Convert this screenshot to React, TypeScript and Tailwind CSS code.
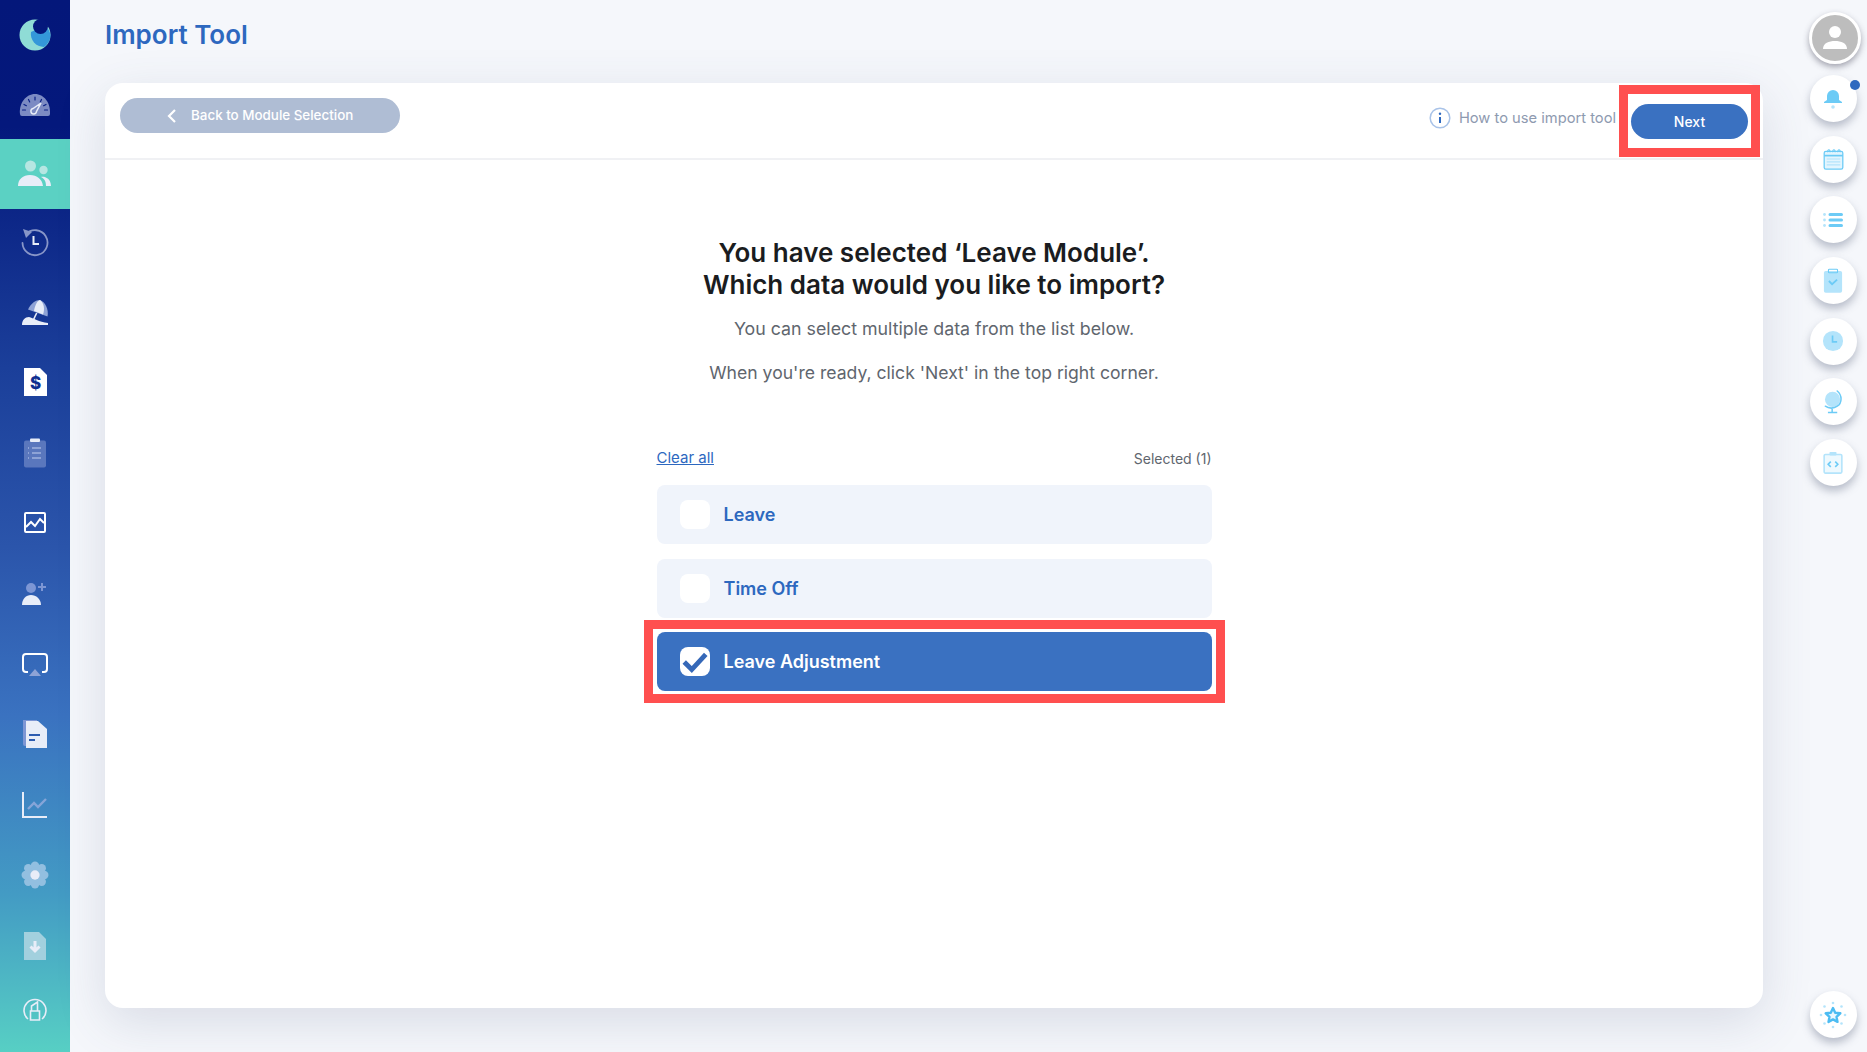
import React from 'react';

const W = '#e8edf8';

const Moon = () => (
  <svg width="32" height="32" viewBox="0 0 32 32">
    <circle cx="16" cy="16" r="15.5" fill="#8fdcd6" />
    <path d="M12 13a13 13 0 0 0 13 15a15.500 15.500 0 0 0 6.500-12a12 12 0 0 0-6.500-9z" fill="#3498d9" />
    <circle cx="21.500" cy="7.500" r="7.500" fill="#04187c" />
  </svg>
);
const Gauge = () => (
  <svg width="32" height="32" viewBox="0 0 32 32">
    <path d="M1 25c-1-11 6-20 15-20s16 9 15 20a2 2 0 0 1-2 2H3a2 2 0 0 1-2-2z" fill="#7c8bc3" />
    <g stroke="#0a2185" strokeWidth="1.200" strokeLinecap="round">
      <path d="M16 8v3M9.500 10.500l1.200 2.400M22.500 10.500l-1.200 2.400M5 15.500l2.400 1.200M27 15.500l-2.400 1.200M3.500 21h3M25.500 21h3" />
    </g>
    <path d="M22 14l-4.500 8.500a2.800 2.800 0 1 1-3.500-3z" fill="none" stroke="#e8edf8" strokeWidth="1.500" />
  </svg>
);
const People = () => (
  <svg width="36" height="32" viewBox="0 0 36 32">
    <circle cx="13.500" cy="8" r="5.500" fill="#b6e6e2" />
    <circle cx="26.500" cy="12" r="4.200" fill="#b6e6e2" />
    <path d="M29 28c0-4-1-7-5-9c3-1 10 1 10 9z" fill="#e8edf8" />
    <path d="M1 28c0-7 5-11 12-11s12 4 13 11z" fill="#e8edf8" />
  </svg>
);
const History = () => (
  <svg width="32" height="32" viewBox="0 0 32 32">
    <path d="M7 8a12.500 12.500 0 1 1-3.500 9" fill="none" stroke="#8896c8" strokeWidth="1.800" strokeLinecap="round" />
    <path d="M4 3l9 3-6 6z" fill="#8896c8" />
    <path d="M14.500 10v8h5.500" fill="none" stroke={W} strokeWidth="2" />
  </svg>
);
const Beach = () => (
  <svg width="32" height="32" viewBox="0 0 32 32">
    <path d="M9 13.500C12 7 17 4 21 4c5 2 9 9 7.500 16.500z" fill="#8fa3d6" />
    <path d="M21 4c-3 1-5 5-6 11l9 3.500C26 13 25 7 21 4z" fill={W} />
    <path d="M17.700 17l-3.400 7" stroke={W} strokeWidth="1.600" />
    <path d="M3 29c0-5 3-8 7-8c4 1 10 5 19 6v2z" fill={W} />
  </svg>
);
const DollarDoc = () => (
  <svg width="32" height="32" viewBox="0 0 32 32">
    <path d="M5 2h16l7 7v21H5z" fill="#fff" />
    <text x="16.500" y="22.500" textAnchor="middle" fontFamily="Inter, sans-serif" fontWeight="800" fontSize="17" fill="#0f2f90">$</text>
  </svg>
);
const Clipboard = () => (
  <svg width="32" height="32" viewBox="0 0 32 32">
    <rect x="5" y="3.500" width="22" height="27" rx="2" fill="#5a77bd" />
    <rect x="11" y="1.500" width="10" height="3.500" rx="1" fill={W} />
    <path d="M13 11h9M13 16h9M13 21h9" stroke="#8ea3d6" strokeWidth="2" />
    <path d="M9 11h1M9 16h1M9 21h1" stroke="#8ea3d6" strokeWidth="2" />
  </svg>
);
const ChartBox = () => (
  <svg width="32" height="32" viewBox="0 0 32 32">
    <rect x="6" y="6" width="20" height="19" rx="1" fill="none" stroke="#fff" strokeWidth="2" />
    <path d="M7 20l5-5 4 4 5-7 4 4" fill="none" stroke="#fff" strokeWidth="2" />
  </svg>
);
const AddUser = () => (
  <svg width="32" height="32" viewBox="0 0 32 32">
    <circle cx="12" cy="10" r="5" fill="#7d96d4" />
    <path d="M3 27c0-6 4-10 9-10s10 4 10 10z" fill={W} />
    <path d="M23 5v8M19 9h8" stroke="#7d96d4" strokeWidth="2" />
  </svg>
);
const Monitor = () => (
  <svg width="32" height="32" viewBox="0 0 32 32">
    <path d="M9 24H7a3 3 0 0 1-3-3V9a3 3 0 0 1 3-3h18a3 3 0 0 1 3 3v12a3 3 0 0 1-3 3h-2" fill="none" stroke="#fff" strokeWidth="2" />
    <path d="M16 21l6 7H10z" fill="#8ea3d6" />
  </svg>
);
const Doc = () => (
  <svg width="32" height="32" viewBox="0 0 32 32">
    <path d="M4 2h14v26H6a2 2 0 0 1-2-2z" fill="#7d96d4" />
    <path d="M7 3h12l9 8v19H7z" fill={W} />
    <path d="M10 17h11" stroke="#2d5cb0" strokeWidth="2" />
    <path d="M10 22h6" stroke="#2d5cb0" strokeWidth="2" />
  </svg>
);
const LineChart = () => (
  <svg width="32" height="32" viewBox="0 0 32 32">
    <path d="M4 3v25h24" fill="none" stroke={W} strokeWidth="2" />
    <path d="M9 20l6-6 4 4 8-8" fill="none" stroke="#86a5d8" strokeWidth="2.400" />
  </svg>
);
const Gear = () => (
  <svg width="32" height="32" viewBox="-3 -3 38 38">
    <g fill="#92bfe0">
      <circle cx="16" cy="5" r="5" /><circle cx="16" cy="27" r="5" />
      <circle cx="5" cy="16" r="5" /><circle cx="27" cy="16" r="5" />
      <circle cx="8" cy="8" r="5" /><circle cx="24" cy="8" r="5" />
      <circle cx="8" cy="24" r="5" /><circle cx="24" cy="24" r="5" />
      <circle cx="16" cy="16" r="9" />
    </g>
    <circle cx="16" cy="16" r="5.500" fill={W} />
  </svg>
);
const DownDoc = () => (
  <svg width="32" height="32" viewBox="0 0 32 32">
    <path d="M5 2h15l7 7v21H5z" fill="#a2d0de" />
    <path d="M16 11v10M11.500 16.500l4.500 4.500 4.500-4.500" fill="none" stroke={W} strokeWidth="3" />
  </svg>
);
const CircleA = () => (
  <svg width="32" height="32" viewBox="0 0 32 32">
    <path d="M9 25a11 11 0 1 1 14 0" fill="none" stroke={W} strokeWidth="1.600" />
    <path d="M11.500 26v-9h9v9zM12.500 17v-5l6-4v9" fill="none" stroke={W} strokeWidth="1.600" />
  </svg>
);

const sideItems = [Gauge, People, History, Beach, DollarDoc, Clipboard, ChartBox, AddUser, Monitor, Doc, LineChart, Gear, DownDoc];

const B = '#6ccbf6';
const L = '#b4e4fb';

const Bell = () => (
  <svg width="20" height="20" viewBox="0 0 20 20">
    <path d="M4 11V7a6 6 0 0 1 12 0v4l3 2v1H1v-1z" fill={B} />
    <circle cx="10" cy="18" r="1.800" fill={L} />
  </svg>
);
const Calendar = () => (
  <svg width="21" height="22" viewBox="0 0 24 26">
    <rect x="1" y="4" width="22" height="21" rx="2" fill="#e3f5fe" stroke={B} strokeWidth="1.500" />
    <path d="M1 9h22" stroke={B} strokeWidth="2" />
    <path d="M4 13h16M4 16.500h16M4 20h16" stroke={L} strokeWidth="1.400" />
    <path d="M5 5c0-4 3-4 3 0M11 5c0-4 3-4 3 0M17 5c0-4 3-4 3 0" fill="none" stroke={B} strokeWidth="1.300" />
  </svg>
);
const ListIcon = () => (
  <svg width="20" height="16" viewBox="0 0 20 16">
    <circle cx="1.500" cy="2.500" r="1.400" fill={L} /><circle cx="1.500" cy="8" r="1.400" fill={L} /><circle cx="1.500" cy="13.500" r="1.400" fill={L} />
    <path d="M7 2.500h11.500M7 8h11.500M7 13.500h11.500" stroke={B} strokeWidth="3" strokeLinecap="round" />
  </svg>
);
const ClipCheck = () => (
  <svg width="20" height="26" viewBox="0 0 22 28">
    <rect x="1" y="3" width="20" height="24" rx="2" fill={L} />
    <rect x="6" y="1" width="10" height="4" rx="1" fill="none" stroke={B} strokeWidth="1.200" />
    <path d="M6.500 14l3.500 3.500 5.500-5" fill="none" stroke={B} strokeWidth="2" />
  </svg>
);
const Clock = () => (
  <svg width="22" height="22" viewBox="0 0 24 24">
    <circle cx="12" cy="12" r="11" fill={L} />
    <path d="M11.500 6v7h5" fill="none" stroke={B} strokeWidth="1.800" />
  </svg>
);
const Globe = () => (
  <svg width="22" height="24" viewBox="0 0 26 28">
    <circle cx="12.500" cy="11" r="9" fill={L} />
    <path d="M18 1c6 5 6 14 0 18c-4 3-10 3-14 0" fill="none" stroke={B} strokeWidth="1.800" strokeLinecap="round" />
    <path d="M12 22v4M7 26.500h11" stroke={B} strokeWidth="1.800" />
  </svg>
);
const CodeClip = () => (
  <svg width="20" height="23" viewBox="0 0 22 26">
    <rect x="1" y="4" width="20" height="21" rx="1.500" fill="#eef9fe" stroke={L} strokeWidth="1.800" />
    <rect x="7" y="1" width="8" height="4" rx="1" fill={L} />
    <path d="M8.500 12l-3 3 3 3M13.500 12l3 3-3 3" fill="none" stroke={B} strokeWidth="1.800" />
  </svg>
);
const StarIcon = () => (
  <svg width="30" height="30" viewBox="0 0 30 30">
    <path d="M15 8l2.200 4.700 5.100.6-3.800 3.500 1 5.100-4.500-2.500-4.500 2.500 1-5.100-3.800-3.500 5.100-.6z" fill="#e9f8ff" stroke="#4cbcf2" strokeWidth="2.400" strokeLinejoin="round" />
    <g fill={L}>
      <circle cx="15" cy="3" r="1.300" /><circle cx="15" cy="27" r="1.300" />
      <circle cx="3" cy="15" r="1.300" /><circle cx="27" cy="15" r="1.300" />
      <circle cx="6.500" cy="6.500" r="1.300" /><circle cx="23.500" cy="6.500" r="1.300" />
      <circle cx="6.500" cy="23.500" r="1.300" /><circle cx="23.500" cy="23.500" r="1.300" />
    </g>
  </svg>
);

const railItems = [Calendar, ListIcon, ClipCheck, Clock, Globe, CodeClip];

const RailButton = ({ children }: { children: React.ReactNode }) => (
  <button className="relative flex h-[47px] w-[47px] items-center justify-center rounded-full bg-white shadow-[0_5px_8px_rgba(70,80,110,0.35)]">
    {children}
  </button>
);

const Row = ({ label }: { label: string }) => (
  <div className="flex h-[59px] items-center rounded-lg bg-[#f0f4fb] pl-[23px]">
    <span className="h-[29px] w-[30px] rounded-lg bg-white" />
    <span className="ml-[14px] text-[18px] font-semibold text-[#2d68bf]">{label}</span>
  </div>
);

export default function App() {
  return (
    <div className="flex h-screen overflow-hidden bg-[#f5f7fb] font-['Inter',sans-serif]">
      {/* Sidebar */}
      <aside className="flex w-[70px] shrink-0 flex-col bg-[linear-gradient(180deg,#04177a_0%,#04187c_12%,#1b3f9a_35%,#2b55ab_52%,#3a72c0_68%,#439bc4_85%,#57cfc4_100%)]">
        <div className="flex h-[69px] items-center justify-center">
          <Moon />
        </div>
        {sideItems.map((Icon, i) => (
          <div
            key={i}
            className={
              i === 0
                ? 'flex h-[70px] items-center justify-center pt-[2px]'
                : i === 1
                  ? 'flex h-[70px] items-center justify-center bg-[#5bd1c3]'
                  : 'flex h-[70.400px] items-center justify-center pb-[5px]'
            }
          >
            <Icon />
          </div>
        ))}
        <div className="flex h-[58px] items-center justify-center pb-[5px]">
          <CircleA />
        </div>
      </aside>

      {/* Main */}
      <main className="flex min-w-0 flex-1 flex-col pb-[44px] pl-[35px] pr-[36px]">
        <div className="flex h-[83px] shrink-0 items-start">
          <h1 className="mt-[17px] text-[26px] font-semibold leading-[35px] text-[#2d68bf]">Import Tool</h1>
        </div>

        <section className="flex flex-1 flex-col rounded-[18px] bg-white shadow-[0_14px_50px_rgba(70,80,120,0.16)]">
          <header className="flex h-[77px] shrink-0 items-start justify-between border-b-2 border-[#f0f1f4] pl-[15px] pr-[3px]">
            <button className="mt-[15px] flex h-[35px] w-[280px] items-center rounded-full bg-[#afbdd4] pl-[46px] text-[13.400px] font-medium text-white">
              <svg width="12" height="16" viewBox="0 0 12 16" className="mr-[13px]">
                <path d="M9 2L3 8l6 6" fill="none" stroke="#fff" strokeWidth="2.200" />
              </svg>
              Back to Module Selection
            </button>
            <div className="mt-[2px] flex items-start">
              <svg width="22" height="22" viewBox="0 0 22 22" className="mr-[8px] mt-[22px]">
                <circle cx="11" cy="11" r="9.800" fill="none" stroke="#a9c3e8" strokeWidth="1.500" />
                <circle cx="11" cy="6.800" r="1.200" fill="#2d68bf" />
                <path d="M11 10v6" stroke="#2d68bf" strokeWidth="2" />
              </svg>
              <span className="mt-[23px] text-[14.700px] leading-[20px] text-[#8e9ab0]">How to use import tool</span>
              <div className="ml-[3px] border-[9px] border-[#ff4f4f] px-[3px] py-[9.500px]">
                <button className="flex h-[35px] w-[117px] items-center justify-center rounded-full bg-[#3a71c1] text-[14px] font-medium text-white">
                  Next
                </button>
              </div>
            </div>
          </header>

          <div className="flex flex-col items-center pt-[77px]">
            <h2 className="text-center text-[26px] font-semibold leading-[32px] text-[#1a1c20]">
              You have selected ‘Leave Module’.
              <br />
              Which data would you like to import?
            </h2>
            <p className="mt-[16px] text-[17.800px] leading-[24px] text-[#5f666e]">You can select multiple data from the list below.</p>
            <p className="mt-[20px] text-[17.600px] leading-[24px] text-[#5f666e]">When you're ready, click 'Next' in the top right corner.</p>

            <div className="mt-[63px] w-[555px]">
              <div className="mb-[17px] flex h-[20px] items-center justify-between text-[14px]">
                <a className="text-[15px] text-[#2d68bf] underline">Clear all</a>
                <span className="text-[#5f666e]">Selected (1)</span>
              </div>
              <div className="flex flex-col gap-[15px]">
                <Row label="Leave" />
                <Row label="Time Off" />
              </div>
              <div className="-mx-[13px] mt-[2px] border-[9px] border-[#ff4f4f] px-[4px] py-[3px]">
                <div className="flex h-[59px] items-center rounded-lg bg-[#3a71c1] pl-[23px]">
                  <span className="flex h-[29px] w-[30px] items-center justify-center rounded-lg bg-white">
                    <svg width="28" height="24" viewBox="0 0 26 22">
                      <path d="M3 11l7 7L23 4" fill="none" stroke="#3568b8" strokeWidth="4.500" />
                    </svg>
                  </span>
                  <span className="ml-[14px] text-[18px] font-semibold text-white">Leave Adjustment</span>
                </div>
              </div>
            </div>
          </div>
        </section>
      </main>

      {/* Right rail */}
      <aside className="flex w-[68px] shrink-0 flex-col items-center pb-[14px] pt-[12px]">
        <div className="ml-[3px] flex h-[52px] w-[52px] items-center justify-center rounded-full border-[3px] border-white bg-[#bdbdbd] shadow-[0_3px_6px_rgba(60,60,80,0.45)]">
          <svg width="30" height="30" viewBox="0 0 30 30">
            <circle cx="15" cy="9" r="6" fill="#fff" />
            <path d="M3 26c0-6 6-8 12-8s12 2 12 8z" fill="#fff" />
          </svg>
        </div>
        <div className="mt-[11px] flex flex-col gap-[13.700px]">
          <RailButton>
            <Bell />
            <span className="absolute -right-[3px] top-[5px] h-[10px] w-[10px] rounded-full bg-[#2d68bf]" />
          </RailButton>
          {railItems.map((Icon, i) => (
            <RailButton key={i}>
              <Icon />
            </RailButton>
          ))}
        </div>
        <div className="mt-auto">
          <RailButton>
            <StarIcon />
          </RailButton>
        </div>
      </aside>
    </div>
  );
}
